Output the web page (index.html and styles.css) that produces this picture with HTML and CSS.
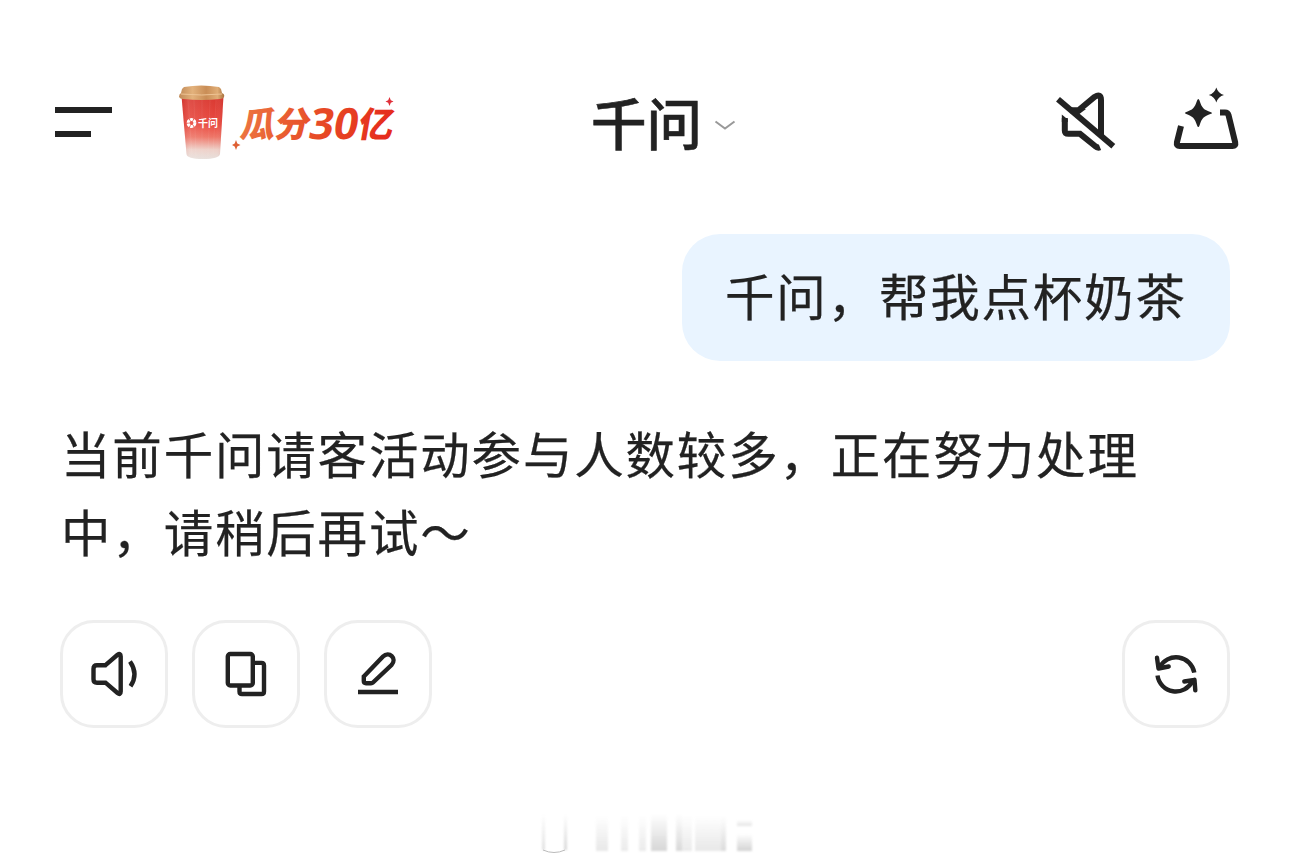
FILE: index.html
```html
<!DOCTYPE html>
<html lang="zh-CN">
<head>
    <meta charset="UTF-8">
    <meta name="viewport" content="width=device-width, initial-scale=1.0">
    <title>千问</title>
    <link rel="stylesheet" href="styles.css">
</head>
<body>
    <!-- 顶部导航 -->
    <div class="header">
        <div class="menu">
            <span></span>
            <span class="short"></span>
        </div>
        <a class="activity" href="#">
            <svg class="cup" width="50" height="80" viewBox="0 0 50 80">
                <defs>
                    <linearGradient id="cupBody" x1="0" y1="0" x2="0" y2="1">
                        <stop offset="0" stop-color="#d93831"/>
                        <stop offset="0.45" stop-color="#e94a40"/>
                        <stop offset="0.65" stop-color="#ee7567"/>
                        <stop offset="0.85" stop-color="#eed0c8"/>
                        <stop offset="1" stop-color="#e8e0dc"/>
                    </linearGradient>
                    <linearGradient id="cupShade" x1="0" y1="0" x2="1" y2="0">
                        <stop offset="0" stop-color="#a01010" stop-opacity="0.15"/>
                        <stop offset="0.2" stop-color="#fff" stop-opacity="0.1"/>
                        <stop offset="0.8" stop-color="#fff" stop-opacity="0"/>
                        <stop offset="1" stop-color="#a01010" stop-opacity="0.15"/>
                    </linearGradient>
                    <linearGradient id="cupLid" x1="0" y1="0" x2="1" y2="0">
                        <stop offset="0" stop-color="#c08a58"/>
                        <stop offset="0.3" stop-color="#e3b27c"/>
                        <stop offset="0.6" stop-color="#c98d56"/>
                        <stop offset="0.85" stop-color="#e0ad76"/>
                        <stop offset="1" stop-color="#a8733f"/>
                    </linearGradient>
                </defs>
                <path d="M4.500 16H46.500L43 74Q42 79 26 79T9.500 74Z" fill="url(#cupBody)"/>
                <path d="M4.500 16H46.500L43 74Q42 79 26 79T9.500 74Z" fill="url(#cupShade)"/>
                <path d="M11 20L15 75M17 20L19 76M25 20V77M33 20L31 76M39 20L36 75" stroke="#fff" stroke-opacity="0.06" stroke-width="1"/>
                <path d="M5 9L7 7Q24 4 42 7L44 9L45 13Q48 14 47 17Q46 19 43 19Q25 21 6 19Q3 19 2 17Q2 14 4 13Z" fill="url(#cupLid)"/>
                <path d="M4 14Q25 16 45 14" fill="none" stroke="#eec394" stroke-width="1"/>
                <circle cx="14.500" cy="43" r="3.400" fill="none" stroke="#fff" stroke-width="3" stroke-dasharray="2.800 0.760"/>
                <text class="cup-text" x="21" y="47">千问</text>
            </svg>
            <svg class="slogan" width="172" height="60" viewBox="0 0 172 60">
                <defs>
                    <linearGradient id="slogan" gradientUnits="userSpaceOnUse" x1="8" y1="0" x2="165" y2="0">
                        <stop offset="0" stop-color="#ec7440"/>
                        <stop offset="0.5" stop-color="#e74a26"/>
                        <stop offset="1" stop-color="#e5281b"/>
                    </linearGradient>
                </defs>
                <g transform="translate(7 0) skewX(-10)" fill="url(#slogan)">
                    <text class="slogan-cn" x="7.500" y="42">瓜</text>
                    <text class="slogan-cn" x="42" y="42">分</text>
                    <text class="slogan-num" x="76" y="44" textLength="49" lengthAdjust="spacingAndGlyphs">30</text>
                    <text class="slogan-cn" x="125.500" y="42">亿</text>
                </g>
                <path d="M157.500 2L158.800 5.200L161.500 6.500L158.800 7.800L157.500 11L156.200 7.800L153.500 6.500L156.200 5.200Z" fill="#e0303a"/>
                <path d="M4 45L5.300 48.600L8.500 50L5.300 51.400L4 55L2.700 51.400L0 50L2.700 48.600Z" fill="#df6034"/>
            </svg>
        </a>
        <div class="title">
            <h1>千问</h1>
            <svg width="22" height="12" viewBox="0 0 22 12">
                <path d="M1.500 2.500L11 9.500L20.500 2.500" fill="none" stroke="#999" stroke-width="2"/>
            </svg>
        </div>
        <div class="actions">
            <svg width="70" height="76" viewBox="0 0 70 76">
                <path d="M20 28.200H28.500L44.500 15Q51 11 51 18V53"/>
                <path d="M28 33V27H36Z" class="solid"/>
                <path d="M14.800 36V48.500Q14.800 51.800 18.500 51.800H30L45 64Q47.500 66.300 50 65.300"/>
                <path d="M11.800 32.500L17.800 37.600V40H11.800Z" class="solid"/>
                <path d="M8 17.300L63.300 64.300"/>
            </svg>
            <svg width="80" height="76" viewBox="0 2 80 76">
                <path d="M16 46L11.900 62.500Q11.200 66 14.700 66H67.500Q71 66 70.200 62.500L63.500 35Q62.800 32.400 60 32.400H55"/>
                <path class="solid" d="M33.300 19Q34 19 34.500 20.500C37 28 38.500 29.700 46 32.200Q48 33 46 33.800C38.500 36.500 37 38 34.500 45.500Q34 47 33.300 47T32.100 45.500C29.500 38 28 36.500 20.700 33.800Q19 33 20.700 32.200C28 29.700 29.500 28 32.100 20.500Q32.600 19 33.300 19Z"/>
                <path class="solid" d="M51.300 7.500Q53 13.300 59 15Q53 16.700 51.300 22.500Q49.600 16.700 43.800 15Q49.600 13.300 51.300 7.500Z"/>
            </svg>
        </div>
    </div>

    <!-- 对话内容 -->
    <div class="chat">
        <div class="question">千问，帮我点杯奶茶</div>
        <p class="answer">当前千问请客活动参与人数较多，正在努力处理中，请稍后再试～</p>
        <div class="tools">
            <button>
                <svg width="54" height="54" viewBox="0 0 54 54">
                    <path d="M18.500 18.200L30.500 7.800Q33.700 5.500 33.700 9.500V44.500Q33.700 48.500 30.500 46L18.500 35.700H10Q6.500 35.700 6.500 32.200V21.700Q6.500 18.200 10 18.200Z"/>
                    <path d="M43 14.500Q51.700 27 43.500 39.300"/>
                </svg>
            </button>
            <button>
                <svg width="54" height="54" viewBox="0 0 54 54">
                    <rect x="8.800" y="7" width="25" height="31.500" rx="2.500"/>
                    <path d="M34 15.900H42.500Q45 15.900 45 18.400V44.500Q45 47 42.500 47H23Q20.500 47 20.500 44.500V39"/>
                </svg>
            </button>
            <button>
                <svg width="54" height="54" viewBox="0 0 54 54">
                    <path d="M12.800 29.500L32 9.500C38 3.500 46.500 11.500 40.500 18L22 35.500Q21.300 36.200 20 36.200H15Q12.800 36.200 12.800 34Z"/>
                    <path d="M7 45H47"/>
                </svg>
            </button>
            <button class="refresh">
                <svg width="54" height="54" viewBox="0 0 54 54">
                    <path d="M45.300 25.700A18.500 18.500 0 0 0 10.500 20.500"/>
                    <path d="M8.500 28.500A18.500 18.500 0 0 0 43.500 34"/>
                    <path class="round" d="M8 10.800L9.500 21.500L19.700 19.500M46.300 43.300L45.500 32.800L35.300 34.500"/>
                </svg>
            </button>
        </div>
    </div>

    <!-- 底部淡出的水印 -->
    <div class="footer">
        <svg width="220" height="48" viewBox="0 0 220 48">
            <defs>
                <linearGradient id="fade" x1="0" y1="0" x2="0" y2="1">
                    <stop offset="0" stop-color="#777" stop-opacity="0"/>
                    <stop offset="1" stop-color="#777"/>
                </linearGradient>
            </defs>
            <g class="mark" fill="url(#fade)">
                <rect x="2" y="4" width="3" height="36" opacity="0.22"/>
                <rect x="24" y="4" width="3" height="36" opacity="0.28"/>
                <rect x="56" y="6" width="12" height="35" opacity="0.17"/>
                <rect x="81" y="6" width="7" height="35" opacity="0.15"/>
                <rect x="99" y="6" width="7" height="35" opacity="0.15"/>
                <rect x="111" y="4" width="16" height="37" opacity="0.3"/>
                <rect x="136" y="4" width="6" height="37" opacity="0.28"/>
                <rect x="142" y="6" width="10" height="35" opacity="0.15"/>
                <rect x="155" y="6" width="26" height="35" opacity="0.17"/>
                <rect x="181" y="6" width="5" height="35" opacity="0.26"/>
                <rect x="197" y="10" width="15" height="6" opacity="0.2"/>
                <rect x="197" y="24" width="15" height="17" opacity="0.32"/>
            </g>
            <path d="M3 40Q14 45 25 40" fill="none" stroke="#bbb" stroke-width="1"/>
        </svg>
    </div>
</body>
</html>
```
FILE: styles.css
```css
*{
    margin: 0;
    padding: 0;
    box-sizing: border-box;
}
body{
    width: 1290px;
    height: 866px;
    overflow: hidden;
    background: #fff;
    color: #222;
    font-family: "Noto Sans CJK SC", sans-serif;
}
svg{
    display: block;
    overflow: visible;
}
/* 顶部导航 */
.header{
    display: flex;
    align-items: center;
    height: 160px;
    margin-top: 40px;
    padding: 0 45px 0 55px;
}
.menu{
    display: flex;
    flex-direction: column;
    gap: 18px;
    width: 57px;
    margin-top: 4px;
}
.menu span{
    height: 6px;
    background: #222;
}
.menu .short{
    width: 36px;
}
.activity{
    display: flex;
    align-items: center;
    gap: 5px;
    margin-left: 65px;
    text-decoration: none;
}
.activity .slogan{
    margin-top: 10px;
}
.cup-text{
    font-size: 10px;
    font-weight: 700;
    fill: #fff;
}
.slogan-cn{
    font-size: 35px;
    font-weight: 900;
}
.slogan-num{
    font-family: "Open Sans", "Liberation Sans", sans-serif;
    font-size: 43px;
    font-weight: 700;
}
.title{
    display: flex;
    align-items: center;
    gap: 12px;
    margin-left: 187px;
}
.title h1{
    margin-top: 2px;
    font-size: 55.5px;
    font-weight: 500;
    line-height: 80px;
    -webkit-text-stroke: 0.6px #222;
}
.title svg{
    margin-top: 10px;
}
.actions{
    display: flex;
    gap: 45px;
    margin-left: auto;
}
.actions path{
    fill: none;
    stroke: #222;
    stroke-width: 6;
}
.actions .solid{
    fill: #222;
    stroke: none;
}
/* 对话内容 */
.chat{
    display: flex;
    flex-direction: column;
    padding: 34px 60px 0;
}
.question{
    align-self: flex-end;
    width: 548px;
    height: 127px;
    padding-left: 43px;
    border-radius: 38px;
    background: #e9f4ff;
    font-size: 49.5px;
    letter-spacing: 1.8px;
    line-height: 121px;
    white-space: nowrap;
    -webkit-text-stroke: 0.25px #222;
}
.answer{
    margin-top: 53px;
    padding-left: 1px;
    font-size: 49.5px;
    letter-spacing: 1.82px;
    line-height: 78px;
    -webkit-text-stroke: 0.25px #222;
}
.tools{
    display: flex;
    gap: 24px;
    margin-top: 50px;
}
.tools button{
    display: flex;
    align-items: center;
    justify-content: center;
    width: 108px;
    height: 108px;
    border: 3px solid #eee;
    border-radius: 34px;
    background: #fff;
}
.tools .refresh{
    margin-left: auto;
}
.tools path,
.tools rect{
    fill: none;
    stroke: #222;
    stroke-width: 4.4;
}
.tools .round{
    stroke-linecap: round;
    stroke-linejoin: round;
}
/* 底部水印 */
.footer{
    margin: 82px 0 0 540px;
}
.footer .mark{
    filter: blur(1px);
}
```
